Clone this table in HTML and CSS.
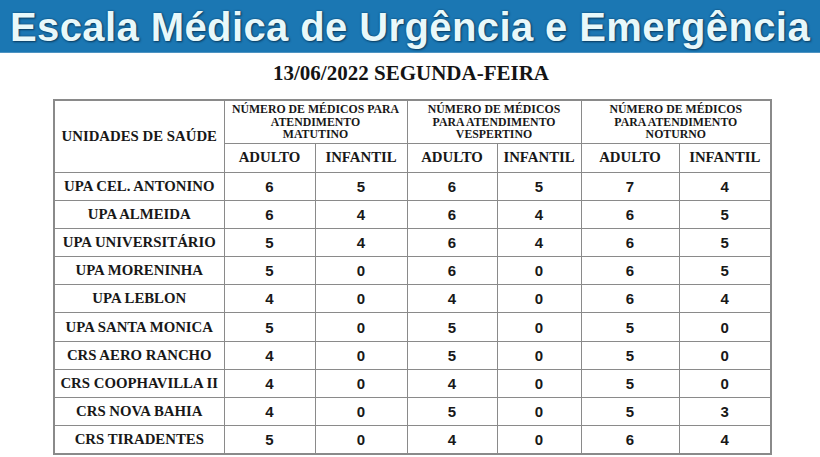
FILE: index.html
```html
<!DOCTYPE html>
<html lang="pt-BR">
<head>
<meta charset="utf-8">
<title>Escala Médica de Urgência e Emergência</title>
<link rel="stylesheet" href="styles.css">
</head>
<body>
<header class="banner"><h1 class="banner-title">Escala Médica de Urgência e Emergência</h1></header>
<h2 class="date">13/06/2022 SEGUNDA-FEIRA</h2>
<table class="grid">
  <colgroup>
    <col class="c-unit"><col class="c1"><col class="c2"><col class="c3"><col class="c4"><col class="c5"><col class="c6">
  </colgroup>
  <thead>
    <tr class="hr1">
      <th rowspan="2" class="unit-head">UNIDADES DE SAÚDE</th>
      <th colspan="2" class="group">NÚMERO DE MÉDICOS PARA<br>ATENDIMENTO<br>MATUTINO</th>
      <th colspan="2" class="group">NÚMERO DE MÉDICOS<br>PARA ATENDIMENTO<br>VESPERTINO</th>
      <th colspan="2" class="group">NÚMERO DE MÉDICOS<br>PARA ATENDIMENTO<br>NOTURNO</th>
    </tr>
    <tr class="hr2">
      <th class="sub">ADULTO</th><th class="sub">INFANTIL</th>
      <th class="sub">ADULTO</th><th class="sub">INFANTIL</th>
      <th class="sub">ADULTO</th><th class="sub">INFANTIL</th>
    </tr>
  </thead>
  <tbody>
    <tr><th class="unit">UPA CEL. ANTONINO</th><td>6</td><td>5</td><td>6</td><td>5</td><td>7</td><td>4</td></tr>
    <tr><th class="unit">UPA ALMEIDA</th><td>6</td><td>4</td><td>6</td><td>4</td><td>6</td><td>5</td></tr>
    <tr><th class="unit">UPA UNIVERSITÁRIO</th><td>5</td><td>4</td><td>6</td><td>4</td><td>6</td><td>5</td></tr>
    <tr><th class="unit">UPA MORENINHA</th><td>5</td><td>0</td><td>6</td><td>0</td><td>6</td><td>5</td></tr>
    <tr><th class="unit">UPA LEBLON</th><td>4</td><td>0</td><td>4</td><td>0</td><td>6</td><td>4</td></tr>
    <tr><th class="unit">UPA SANTA MONICA</th><td>5</td><td>0</td><td>5</td><td>0</td><td>5</td><td>0</td></tr>
    <tr><th class="unit">CRS AERO RANCHO</th><td>4</td><td>0</td><td>5</td><td>0</td><td>5</td><td>0</td></tr>
    <tr><th class="unit">CRS COOPHAVILLA II</th><td>4</td><td>0</td><td>4</td><td>0</td><td>5</td><td>0</td></tr>
    <tr><th class="unit">CRS NOVA BAHIA</th><td>4</td><td>0</td><td>5</td><td>0</td><td>5</td><td>3</td></tr>
    <tr><th class="unit">CRS TIRADENTES</th><td>5</td><td>0</td><td>4</td><td>0</td><td>6</td><td>4</td></tr>
  </tbody>
</table>
</body>
</html>
```
FILE: styles.css
```css
html, body {
  margin: 0;
  padding: 0;
  background: #ffffff;
}
body {
  width: 820px;
  height: 457px;
  overflow: hidden;
}
.banner {
  height: 53px;
  background: #1b77b3;
  display: flex;
  align-items: center;
  padding-left: 10px;
  box-sizing: border-box;
  border-bottom: 1px solid #4d93c2;
}
.banner-title {
  margin: 0;
  font-family: "Liberation Sans", Arial, sans-serif;
  font-weight: bold;
  font-size: 40px;
  letter-spacing: 0.4px;
  line-height: 1;
  color: #e8f8fa;
  white-space: nowrap;
  text-shadow: 0 0 2px #0c3e63, 1px 1px 2px #0c3e63;
  padding-top: 2px;
}
.date {
  margin: 8px 0 0 0;
  height: 38px;
  text-align: center;
  font-family: "Liberation Serif", "Times New Roman", serif;
  font-weight: bold;
  font-size: 21px;
  line-height: 24px;
  color: #141414;
  padding-left: 2px;
}
.grid {
  margin-left: 53px;
  width: 717px;
  table-layout: fixed;
  border-collapse: collapse;
  border: 2px solid #8a8a8a;
  color: #181818;
}
.c-unit { width: 170px; }
.c1 { width: 91px; }
.c2 { width: 92px; }
.c3 { width: 90px; }
.c4 { width: 84px; }
.c5 { width: 98px; }
.c6 { width: 92px; }
.grid th, .grid td {
  border: 1px solid #8a8a8a;
  padding: 0;
  text-align: center;
  vertical-align: middle;
}
.hr1 { height: 43px; }
.hr2 { height: 29px; }
.grid tbody tr { height: 28.2px; }
.unit-head, .unit, .sub, .group {
  font-family: "Liberation Serif", "Times New Roman", serif;
  font-weight: bold;
  white-space: nowrap;
}
.unit-head { font-size: 14.8px; }
.unit { font-size: 14.8px; }
.sub { font-size: 14.8px; }
.group {
  font-size: 11.8px;
  line-height: 12.5px;
  padding-top: 1px;
}
.grid td {
  font-family: "Liberation Sans", Arial, sans-serif;
  font-weight: bold;
  font-size: 15px;
}
```
